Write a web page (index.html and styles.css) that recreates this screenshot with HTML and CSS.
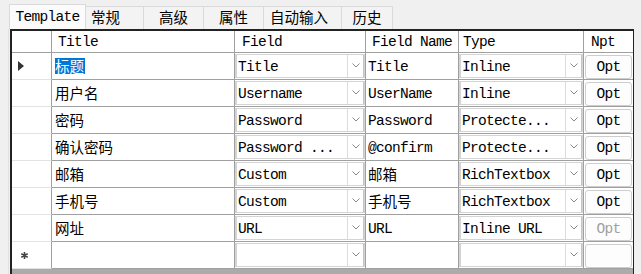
FILE: index.html
```html
<!DOCTYPE html>
<html lang="zh">
<head>
    <meta charset="UTF-8">
    <title>Template</title>
    <link rel="stylesheet" href="styles.css">
</head>
<body>
    <div class="tabs">
        <div class="tab active t-template">Template</div>
        <div class="tab t-normal"><span class="cn">常规</span></div>
        <div class="tab t-adv"><span class="cn">高级</span></div>
        <div class="tab t-prop"><span class="cn">属性</span></div>
        <div class="tab t-auto"><span class="cn">自动输入</span></div>
        <div class="tab t-hist"><span class="cn">历史</span></div>
    </div>

    <div class="grid-wrap">
        <div class="grid">
            <!-- header -->
            <div class="rh hd"></div>
            <div class="hd h-title">Title</div>
            <div class="hd h-field">Field</div>
            <div class="hd h-fname">Field Name</div>
            <div class="hd h-type">Type</div>
            <div class="hd h-npt last">Npt</div>

            <!-- row 1 -->
            <div class="rh"><svg class="cur" width="6" height="10" viewBox="0 0 6 10"><path d="M0 0 L6 5 L0 10 Z" fill="#333"/></svg></div>
            <div class="c txt"><span class="cn sel">标题</span></div>
            <div class="c"><div class="combo"><span class="val">Title</span><span class="drop"><svg width="8" height="5" viewBox="0 0 8 5"><polyline points="0.5,0.5 4,4 7.5,0.5" fill="none" stroke="#888" stroke-width="1"/></svg></span></div></div>
            <div class="c txt fn">Title</div>
            <div class="c"><div class="combo"><span class="val">Inline</span><span class="drop"><svg width="8" height="5" viewBox="0 0 8 5"><polyline points="0.5,0.5 4,4 7.5,0.5" fill="none" stroke="#888" stroke-width="1"/></svg></span></div></div>
            <div class="c last"><div class="btn">Opt</div></div>

            <!-- row 2 -->
            <div class="rh"></div>
            <div class="c txt"><span class="cn">用户名</span></div>
            <div class="c"><div class="combo"><span class="val">Username</span><span class="drop"><svg width="8" height="5" viewBox="0 0 8 5"><polyline points="0.5,0.5 4,4 7.5,0.5" fill="none" stroke="#888" stroke-width="1"/></svg></span></div></div>
            <div class="c txt fn">UserName</div>
            <div class="c"><div class="combo"><span class="val">Inline</span><span class="drop"><svg width="8" height="5" viewBox="0 0 8 5"><polyline points="0.5,0.5 4,4 7.5,0.5" fill="none" stroke="#888" stroke-width="1"/></svg></span></div></div>
            <div class="c last"><div class="btn">Opt</div></div>

            <!-- row 3 -->
            <div class="rh"></div>
            <div class="c txt"><span class="cn">密码</span></div>
            <div class="c"><div class="combo"><span class="val">Password</span><span class="drop"><svg width="8" height="5" viewBox="0 0 8 5"><polyline points="0.5,0.5 4,4 7.5,0.5" fill="none" stroke="#888" stroke-width="1"/></svg></span></div></div>
            <div class="c txt fn">Password</div>
            <div class="c"><div class="combo"><span class="val">Protecte...</span><span class="drop"><svg width="8" height="5" viewBox="0 0 8 5"><polyline points="0.5,0.5 4,4 7.5,0.5" fill="none" stroke="#888" stroke-width="1"/></svg></span></div></div>
            <div class="c last"><div class="btn">Opt</div></div>

            <!-- row 4 -->
            <div class="rh"></div>
            <div class="c txt"><span class="cn">确认密码</span></div>
            <div class="c"><div class="combo"><span class="val">Password ...</span><span class="drop"><svg width="8" height="5" viewBox="0 0 8 5"><polyline points="0.5,0.5 4,4 7.5,0.5" fill="none" stroke="#888" stroke-width="1"/></svg></span></div></div>
            <div class="c txt fn">@confirm</div>
            <div class="c"><div class="combo"><span class="val">Protecte...</span><span class="drop"><svg width="8" height="5" viewBox="0 0 8 5"><polyline points="0.5,0.5 4,4 7.5,0.5" fill="none" stroke="#888" stroke-width="1"/></svg></span></div></div>
            <div class="c last"><div class="btn">Opt</div></div>

            <!-- row 5 -->
            <div class="rh"></div>
            <div class="c txt"><span class="cn">邮箱</span></div>
            <div class="c"><div class="combo"><span class="val">Custom</span><span class="drop"><svg width="8" height="5" viewBox="0 0 8 5"><polyline points="0.5,0.5 4,4 7.5,0.5" fill="none" stroke="#888" stroke-width="1"/></svg></span></div></div>
            <div class="c txt fn"><span class="cn">邮箱</span></div>
            <div class="c"><div class="combo"><span class="val">RichTextbox</span><span class="drop"><svg width="8" height="5" viewBox="0 0 8 5"><polyline points="0.5,0.5 4,4 7.5,0.5" fill="none" stroke="#888" stroke-width="1"/></svg></span></div></div>
            <div class="c last"><div class="btn">Opt</div></div>

            <!-- row 6 -->
            <div class="rh"></div>
            <div class="c txt"><span class="cn">手机号</span></div>
            <div class="c"><div class="combo"><span class="val">Custom</span><span class="drop"><svg width="8" height="5" viewBox="0 0 8 5"><polyline points="0.5,0.5 4,4 7.5,0.5" fill="none" stroke="#888" stroke-width="1"/></svg></span></div></div>
            <div class="c txt fn"><span class="cn">手机号</span></div>
            <div class="c"><div class="combo"><span class="val">RichTextbox</span><span class="drop"><svg width="8" height="5" viewBox="0 0 8 5"><polyline points="0.5,0.5 4,4 7.5,0.5" fill="none" stroke="#888" stroke-width="1"/></svg></span></div></div>
            <div class="c last"><div class="btn">Opt</div></div>

            <!-- row 7 -->
            <div class="rh"></div>
            <div class="c txt"><span class="cn">网址</span></div>
            <div class="c"><div class="combo"><span class="val">URL</span><span class="drop"><svg width="8" height="5" viewBox="0 0 8 5"><polyline points="0.5,0.5 4,4 7.5,0.5" fill="none" stroke="#888" stroke-width="1"/></svg></span></div></div>
            <div class="c txt fn">URL</div>
            <div class="c"><div class="combo"><span class="val">Inline URL</span><span class="drop"><svg width="8" height="5" viewBox="0 0 8 5"><polyline points="0.5,0.5 4,4 7.5,0.5" fill="none" stroke="#888" stroke-width="1"/></svg></span></div></div>
            <div class="c last"><div class="btn disabled">Opt</div></div>

            <!-- new row -->
            <div class="rh"><svg class="star" width="7" height="7" viewBox="0 0 7 7"><path d="M3.5 0 V7 M0.3 1.7 L6.7 5.3 M0.3 5.3 L6.7 1.7" stroke="#444" stroke-width="1.6"/></svg></div>
            <div class="c txt"></div>
            <div class="c"><div class="combo"><span class="val"></span><span class="drop"><svg width="8" height="5" viewBox="0 0 8 5"><polyline points="0.5,0.5 4,4 7.5,0.5" fill="none" stroke="#888" stroke-width="1"/></svg></span></div></div>
            <div class="c txt fn"></div>
            <div class="c"><div class="combo"><span class="val"></span><span class="drop"><svg width="8" height="5" viewBox="0 0 8 5"><polyline points="0.5,0.5 4,4 7.5,0.5" fill="none" stroke="#888" stroke-width="1"/></svg></span></div></div>
            <div class="c last"><div class="btn"></div></div>
        </div>
    </div>
</body>
</html>
```

FILE: styles.css
```css
/* Global */
* {
    box-sizing: border-box;
}

body {
    margin: 0;
    width: 641px;
    height: 274px;
    overflow: hidden;
    background-color: #f0f0f0;
    font-family: "Liberation Mono", "Noto Sans CJK SC", monospace;
    font-size: 14.5px;
    letter-spacing: -0.7px;
    color: #000;
}

.cn {
    font-family: "Noto Sans CJK SC", sans-serif;
    font-size: 14.5px;
    letter-spacing: 0;
    line-height: 16px;
    display: inline-block;
    position: relative;
    top: -1px;
}

/* Tabs */
.tabs {
    display: flex;
    align-items: flex-end;
    height: 29px;
    padding-left: 9px;
}

.tab {
    height: 23px;
    margin-right: -1px;
    border: 1px solid #dadada;
    border-bottom: none;
    background-color: #f3f3f3;
    display: flex;
    align-items: center;
    justify-content: center;
    padding-bottom: 1px;
}

.tab.active {
    height: 25px;
    background-color: #fbfbfb;
    position: relative;
    z-index: 1;
}

.t-template { width: 77px; }
.t-normal { width: 59px; justify-content: flex-start; padding-left: 5px; }
.t-adv { width: 61px; }
.t-prop { width: 61px; }
.t-auto { width: 79px; justify-content: flex-start; padding-left: 6px; }
.t-hist { width: 52px; }

/* Grid */
.grid-wrap {
    margin-left: 8px;
    padding-left: 2px;
    border-left: 1px solid #e2e2e2;
    height: 245px;
}

.grid {
    width: 624px;
    height: 245px;
    border-top: 2px solid #222;
    border-left: 2px solid #222;
    border-right: 1px solid #222;
    background-color: #ababab;
    display: grid;
    grid-template-columns: 40px 183px 131px 93px 125px 49px;
    grid-template-rows: 22px repeat(8, 27px);
    align-content: start;
    margin-left: -1px;
}

.grid > div {
    background-color: #fff;
    border-right: 1px solid #a0a0a0;
    border-bottom: 1px solid #a0a0a0;
    display: flex;
    align-items: center;
    white-space: nowrap;
    overflow: hidden;
}

.grid > .last {
    border-right: none;
}

.grid > .rh {
    border-bottom-color: #e3e3e3;
}

.grid > .rh.hd {
    border-bottom-color: #a0a0a0;
}

/* Header */
.h-title { padding-left: 6px; }
.h-field { padding-left: 7px; }
.h-fname { padding-left: 6px; }
.h-type { padding-left: 4px; }
.h-npt { padding-left: 7px; }

/* Row header glyphs */
.cur {
    margin-left: 6px;
}

.star {
    margin-left: 9px;
    margin-top: 1px;
}

/* Cells */
.c {
    padding-top: 2px;
}

.txt {
    padding-left: 3px;
}

.fn {
    padding-left: 2px;
}

.sel {
    background-color: #0078d7;
    color: #fff;
    padding-right: 1px;
}

.combo {
    display: flex;
    align-items: stretch;
    width: 100%;
    height: 100%;
    margin-top: -2px;
    border: 1px solid #d4d4d4;
    border-left-width: 2px;
}

.combo .val {
    flex: 1;
    display: flex;
    align-items: center;
    padding-left: 1px;
    padding-top: 2px;
    overflow: hidden;
}

.drop {
    width: 17px;
    border-left: 1px solid #dcdcdc;
    border-right: 1px solid #c4c4c4;
    display: flex;
    align-items: center;
    justify-content: center;
    padding-bottom: 2px;
}

.btn {
    width: 100%;
    height: 100%;
    margin: -1px 1px 0 1px;
    border: 1px solid #cdcdcd;
    border-radius: 3px;
    background-color: #fdfdfd;
    display: flex;
    align-items: center;
    justify-content: center;
    padding-top: 1px;
}

.btn.disabled {
    color: #a0a0a0;
}
```
